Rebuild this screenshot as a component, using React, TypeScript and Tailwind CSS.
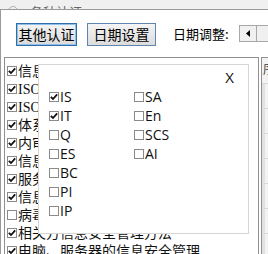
import React from 'react';

const listItems = [
  { label: '信息安全管理体系文件', checked: true },
  { label: 'ISO27001标准条款', checked: true },
  { label: 'ISO27002控制措施', checked: true },
  { label: '体系运行记录', checked: true },
  { label: '内审与管理评审', checked: true },
  { label: '信息资产清单', checked: true },
  { label: '服务连续性计划', checked: true },
  { label: '信息安全风险评估', checked: true },
  { label: '病毒防护管理', checked: false },
  { label: '相关方信息安全管理方法', checked: true },
  { label: '电脑、服务器的信息安全管理', checked: true },
];

const colA = [
  { label: 'IS', checked: true },
  { label: 'IT', checked: true },
  { label: 'Q', checked: false },
  { label: 'ES', checked: false },
  { label: 'BC', checked: false },
  { label: 'PI', checked: false },
  { label: 'IP', checked: false },
];

const colB = [
  { label: 'SA', checked: false },
  { label: 'En', checked: false },
  { label: 'SCS', checked: false },
  { label: 'AI', checked: false },
];

function Check({ checked }: { checked: boolean }) {
  return (
    <span className="w-[10px] h-[10px] shrink-0 border border-[#8a8a8a] bg-white flex items-center justify-center">
      {checked && (
        <svg width="8" height="8" viewBox="0 0 8 8">
          <path d="M0.8 3.8 L3 6 L7.2 1.4" fill="none" stroke="#111" strokeWidth="1.8" />
        </svg>
      )}
    </span>
  );
}

export default function App() {
  return (
    <div className="w-[268px] h-[254px] bg-white relative overflow-hidden" style={{ fontFamily: '"Noto Sans CJK SC", sans-serif' }}>
      {/* Title bar, mostly cut off */}
      <div className="h-[9px] shrink-0 bg-[#f0f0f0] overflow-hidden flex items-end pl-[8px] gap-[12px]">
        <span className="w-[10px] h-[10px] rounded-full border border-[#b0b0b0] mb-[-7px]" />
        <span className="text-[13px] leading-none text-[#666] mb-[-9px]">各种认证</span>
      </div>

      <div className="border-t border-l border-[#9a9a9a] h-[245px] flex flex-col overflow-hidden">
        {/* Toolbar */}
        <div className="shrink-0 flex items-center pl-[15px] pt-[8px] h-[40px] whitespace-nowrap">
          <button className="shrink-0 w-[61px] h-[23px] border border-[#2f6ea7] shadow-[inset_0_0_0_1px_#8cc0ea] bg-gradient-to-b from-[#f4f4f4] to-[#dadada] text-[14px] leading-none text-black">
            其他认证
          </button>
          <button className="shrink-0 ml-[10px] w-[69px] h-[23px] border border-[#5e86b0] bg-gradient-to-b from-[#f4f4f4] to-[#dcdcdc] text-[14px] leading-none text-black">
            日期设置
          </button>
          <span className="shrink-0 ml-[17px] text-[13px] text-black">日期调整:</span>
          <div className="shrink-0 ml-[10px] flex h-[17px] mt-[-2px]">
            <span className="w-[18px] h-[17px] border border-[#a8a8a8] bg-[#f0f0f0] flex items-center justify-center">
              <svg width="4" height="7" viewBox="0 0 4 7"><path d="M4 0 L0 3.5 L4 7 Z" fill="#000" /></svg>
            </span>
            <span className="w-[14px] h-[17px] border-y border-[#a8a8a8] bg-[#f0f0f0]" />
          </div>
        </div>

        {/* List + right grid */}
        <div className="flex mt-[7px] ml-[3px] flex-1 min-h-0">
          <div className="w-[255px] shrink-0 border-t border-l border-r border-[#8f8f8f] pt-[4px] pl-[2px]">
            {listItems.map((it, i) => (
              <div key={i} className="h-[18px] flex items-center gap-[1px] whitespace-nowrap text-[14px] text-[#111]" style={{ fontFamily: '"Liberation Serif", "Noto Sans CJK SC", serif' }}>
                <Check checked={it.checked} />
                <span>{it.label}</span>
              </div>
            ))}
          </div>
          <div className="ml-[2px] flex-1 border-t border-l border-[#8f8f8f] bg-[#f3f3f3]">
            <div className="h-[26px] border-b border-[#d6d6d6] text-[12px] pl-[1px] pt-[2px] text-[#333]">序</div>
            {[0, 1, 2, 3, 4, 5, 6].map((r) => (
              <div key={r} className="h-[25px] border-b border-[#d6d6d6] border-l-[3px] border-l-[#e2e2e2]" />
            ))}
          </div>
        </div>
      </div>

      {/* Popup */}
      <div className="absolute left-[38px] top-[64px] w-[211px] h-[170px] bg-white border border-[#d6d6d6]" style={{ fontFamily: '"Open Sans", "Noto Sans", sans-serif' }}>
        <div className="flex justify-end pr-[14px] pt-[1px] h-[22px] text-[15px] text-[#111]">X</div>
        <div className="flex pl-[10px]">
          <div className="w-[85px] flex flex-col">
            {colA.map((c) => (
              <div key={c.label} className="h-[19px] flex items-center gap-[1px] text-[14px] text-[#111]">
                <Check checked={c.checked} />
                <span>{c.label}</span>
              </div>
            ))}
          </div>
          <div className="flex flex-col">
            {colB.map((c) => (
              <div key={c.label} className="h-[19px] flex items-center gap-[1px] text-[14px] text-[#111]">
                <Check checked={c.checked} />
                <span>{c.label}</span>
              </div>
            ))}
          </div>
        </div>
      </div>
    </div>
  );
}
